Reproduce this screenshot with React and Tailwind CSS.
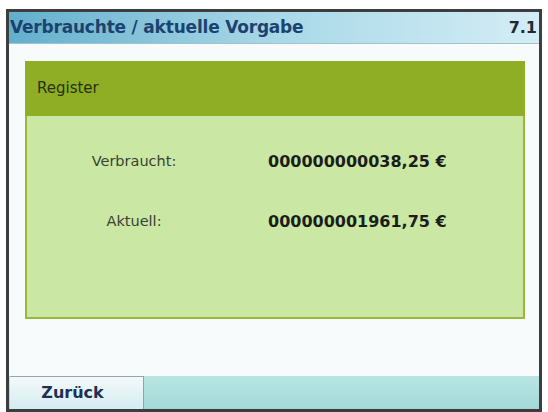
export default function App() {
  return (
    <div className="w-[548px] h-[412px] bg-white pt-[9px] px-[6px] font-['DejaVu_Sans',sans-serif]">
      <div className="h-[403px] border-[3px] border-[#3b3d3f] flex flex-col bg-[#f7fbfb]">
        <div className="h-[32px] shrink-0 flex items-center justify-between pl-[1px] pr-[2px] bg-gradient-to-r from-[#62afcc] via-[#a8d8e8] to-[#d4edf5] border-b border-[#9fc3cf]">
          <span className="text-[17px] font-bold text-[#1c426f] tracking-[-0.2px]">Verbrauchte / aktuelle Vorgabe</span>
          <span className="text-[16px] font-bold text-[#1e2a36]">7.1</span>
        </div>

        <div className="flex-1 pt-[17px] pl-[16px] pr-[14px]">
          <div className="h-[258px] flex flex-col">
            <div className="h-[55px] shrink-0 flex items-center pl-[12px] bg-[#8fad25]">
              <span className="text-[15px] text-[#26330c]">Register</span>
            </div>
            <div className="flex-1 bg-[#cae7a3] border-[2px] border-t-0 border-[#97b83a] pt-[34px]">
              <div className="grid grid-cols-[214px_1fr] gap-y-[36px] items-center">
                <span className="text-center text-[14.5px] text-[#3a3f36]">Verbraucht:</span>
                <span className="pl-[27px] text-[16px] font-bold text-[#1b1d1b]">000000000038,25 €</span>
                <span className="text-center text-[14.5px] text-[#3a3f36]">Aktuell:</span>
                <span className="pl-[27px] text-[16px] font-bold text-[#1b1d1b]">000000001961,75 €</span>
              </div>
            </div>
          </div>
        </div>

        <div className="h-[33px] shrink-0 flex bg-gradient-to-b from-[#b9e6e3] to-[#a2d9d8]">
          <div className="w-[134px] ml-[1px] flex items-center justify-center bg-gradient-to-b from-[#f4f9fa] to-[#d3ecf1] border-t border-r border-[#8aa7b0]">
            <span className="text-[16px] font-bold text-[#1e3152] pr-[8px]">Zurück</span>
          </div>
        </div>
      </div>
    </div>
  );
}
